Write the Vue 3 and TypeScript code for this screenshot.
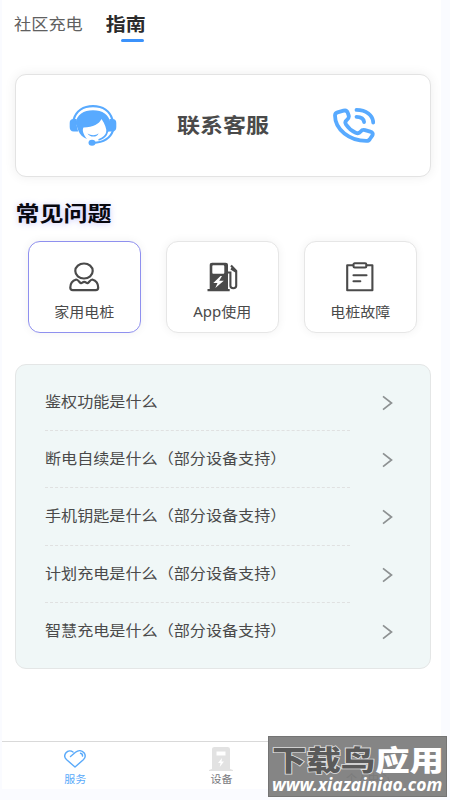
<script setup lang="ts">
import { ref } from 'vue'

interface Topic {
  label: string
  icon: 'user' | 'pump' | 'clipboard'
}

const topics: Topic[] = [
  { label: '家用电桩', icon: 'user' },
  { label: 'App使用', icon: 'pump' },
  { label: '电桩故障', icon: 'clipboard' },
]

const activeTopic = ref(0)

const questions: string[] = [
  '鉴权功能是什么',
  '断电自续是什么（部分设备支持）',
  '手机钥匙是什么（部分设备支持）',
  '计划充电是什么（部分设备支持）',
  '智慧充电是什么（部分设备支持）',
]
</script>

<template>
  <div class="page">
    <main class="screen">
      <nav class="tabs">
        <span class="tab squash">社区充电</span>
        <div class="tab-active">
          <span class="tab-name squash">指南</span>
          <i class="underline"></i>
        </div>
      </nav>

      <section class="contact">
        <svg class="agent" viewBox="0 0 48 41" fill="none">
          <path d="M4.500 15C7 6 14.500 1.200 24 1.200S41 6 43.500 15" stroke="#58aaff" stroke-width="2.300" />
          <path d="M7.500 14H4.500C2 14 .7 15.500 .7 18v4c0 2.800 1.300 4.500 4 4.500h4.500L7.500 20Z" fill="#58aaff" />
          <path d="M40.500 14h3c2.500 0 3.800 1.500 3.800 4v4c0 2.800-1.300 4.500-4 4.500h-4L40.500 20Z" fill="#58aaff" />
          <path d="M6.500 18C8 9.500 14.500 5.300 24 5.300S40 9.500 41.500 18v7.500L37.500 27.500c0-4.500-1.700-8.500-5-13.500-2.500 5-8 8.200-18 8.500-1.500 2.500-.5 6.500 3.500 11.500-4.500-1.500-7-4.500-8.500-8Z" fill="#58aaff" />
          <path d="M18.500 28.500c4 2.300 8 2.300 11-.3-.7 4.500-9 4.500-11 .3Z" fill="#58aaff" />
          <path d="M44 25.500C41.500 33 34 37.400 24 38" stroke="#58aaff" stroke-width="2.200" />
          <path d="M38.500 26C37.500 30.500 34.500 33.500 29.500 35" stroke="#58aaff" stroke-width="1.700" />
          <ellipse cx="23" cy="37.700" rx="3.500" ry="3" fill="#58aaff" />
        </svg>
        <h2 class="contact-title squash">联系客服</h2>
        <svg class="phone" viewBox="0 0 42 35" fill="none" stroke="#58aaff" stroke-width="3.800" stroke-linecap="round" stroke-linejoin="round">
          <path d="M4.500 4.400 10.500 2.700c2-.6 3.500 0 4.200 2L15.700 7.500c.6 2-.2 3-1.700 4.200-2 1.500-2.200 2.800-1 4.700 2.500 3.800 5.700 6.500 9.700 8.300 2 .9 3.600.6 4.900-1.100 1.300-1.700 2.400-2.100 4.400-1.500l5.200 1.500c2.600.8 3.200 2.200 1.900 4.300L36.900 31c-.7 1.300-1.800 1.900-3.400 1.900C16.500 33 2 21.500 2 7.500 2 5.700 2.800 4.900 4.500 4.400Z" />
          <path d="M23.500 1.900C33 2 40 7.200 40.200 14.500" />
          <path d="M23.500 8.800c4.500 0 7.200 1.900 7.600 5.200" />
        </svg>
      </section>

      <h1 class="heading"><span class="squash">常见问题</span></h1>

      <section class="topics">
        <button
          v-for="(topic, i) in topics"
          :key="topic.label"
          class="topic"
          :class="{ selected: i === activeTopic }"
          @click="activeTopic = i"
        >
          <svg v-if="topic.icon === 'user'" class="topic-icon" viewBox="0 0 32 30" fill="none" stroke="#4a4a4a" stroke-width="2.200" stroke-linejoin="round">
            <ellipse cx="16" cy="9" rx="8.700" ry="7.500" />
            <path d="M2.300 25.500C2.300 21.500 4.500 18.700 8.300 17.500c1.200 0 2.200 1.300 3.200 2.500 1 1.300 1.800 1.500 2.800.7 1.300-1 2.600-1 3.900 0 1 .8 1.800.6 2.800-.7 1-1.200 2-2.500 3.200-2.500 3.800 1.200 6 4 6 8 0 1.800-.8 2.700-2.500 2.700H4.800c-1.700 0-2.500-.9-2.500-2.700Z" />
          </svg>
          <svg v-else-if="topic.icon === 'pump'" class="topic-icon" viewBox="0 0 32 30" fill="none">
            <path fill-rule="evenodd" d="M3.700 27V3.200C3.700 1.500 4.500.8 6.200.8h13.300c1.700 0 2.500.7 2.500 2.400V27h1.700v2.200H1.500V27ZM7.500 3.300c-.8 0-1.200.4-1.200 1.200v6c0 .9.400 1.300 1.200 1.300h9.500c.9 0 1.300-.4 1.300-1.300v-6c0-.8-.4-1.200-1.300-1.200ZM14.500 14 7.300 21h4.200l-2.200 5 8.500-7.200h-4.600L16 14Z" fill="#4a4a4a" />
            <path d="M22 10.500h2.400v13.300c0 3.200 5.800 3.200 5.800 0V9L25 3.500M25 6.500l4.800 3" stroke="#4a4a4a" stroke-width="2.100" />
          </svg>
          <svg v-else class="topic-icon" viewBox="0 0 32 30" fill="none" stroke="#4a4a4a" stroke-width="2.100" stroke-linejoin="round">
            <path d="M9.500 3.300H3.200v24.900h25.200V3.300H22" />
            <rect x="9.500" y="1.300" width="12.800" height="4.200" rx="1.200" />
            <path d="M9.500 13.200h13M9.500 19.200h6.800" stroke-linecap="round" />
          </svg>
          <span class="topic-label squash">{{ topic.label }}</span>
        </button>
      </section>

      <ul class="faq">
        <li v-for="q in questions" :key="q" class="row">
          <span class="question"><span class="question-text">{{ q }}</span></span>
          <svg class="chevron" viewBox="0 0 11 16" fill="none" stroke="#8d9192" stroke-width="1.700">
            <path d="M1 1.300 9.500 8 1 14.700" />
          </svg>
        </li>
      </ul>

      <footer class="bar">
        <div class="bar-item current">
          <svg class="heart" viewBox="0 0 22 18" fill="none" stroke="#5aaafa" stroke-width="1.400" stroke-linecap="round" stroke-linejoin="round">
            <path d="M6.500 6.500 11.500 2.300C14.500-.2 18 .5 20 2.800c2 2.600 1.300 5-.7 7L11 17 2.700 9.800C.5 7.800.2 5 2 2.800 4 .5 7 .5 9 2" />
            <path d="M16.500 3.300c1.500.3 2.200 1.300 2 2.800" />
          </svg>
          <span class="bar-label squash">服务</span>
        </div>
        <div class="bar-item">
          <svg class="charger" viewBox="0 0 24 24">
            <path fill-rule="evenodd" d="M3 22V2.500C3 .8 4 0 5.500 0h13C20.200 0 21 .8 21 2.500V22l3 1v1H0v-1ZM7.500 4.500v4h9v-4ZM13 11l-4 5h2.500l-.8 4 4.300-5.500h-2.500Z" fill="#e2e2e2" />
          </svg>
          <span class="bar-label squash">设备</span>
        </div>
        <div class="bar-item"></div>
      </footer>
    </main>

    <aside class="watermark">
      <span class="hidden-tab">个人中心</span>
      <div class="brand"><span class="brand-dark">下载鸟</span><span class="brand-light">应用</span></div>
      <div class="site">www.xiazainiao.com</div>
    </aside>
  </div>
</template>

<style>
body {
  background: #fafbff;
}
</style>

<style scoped>
.page {
  position: relative;
  box-sizing: border-box;
  width: 450px;
  height: 800px;
  padding: 0 9px 11px 2px;
  overflow: hidden;
  background: #fafbff;
  font-family: 'Noto Sans', 'Noto Sans CJK SC', sans-serif;
  color: #4a4a4a;
}

.screen {
  display: flex;
  flex-direction: column;
  box-sizing: border-box;
  height: 789px;
  background: #fff;
}

/* Type is slightly wider than tall throughout */
.squash {
  display: inline-block;
  white-space: nowrap;
  transform: scaleY(0.9);
}

.tabs {
  display: flex;
  gap: 23px;
  height: 74px;
  padding-left: 12px;
}

.tab {
  height: 49px;
  font-size: 17.200px;
  line-height: 49px;
  color: #606060;
}

.tab-active {
  display: flex;
  flex-direction: column;
  align-items: flex-end;
  width: 40px;
}

.tab-name {
  height: 39px;
  font-size: 20px;
  font-weight: 700;
  line-height: 49px;
  color: #2b2b2b;
}

.underline {
  width: 23px;
  height: 3px;
  margin-right: 2px;
  border-radius: 2px;
  background: #3b92fb;
}

.contact {
  display: grid;
  grid-template-columns: 161px 92px 1fr;
  align-items: center;
  box-sizing: border-box;
  width: 416px;
  height: 103px;
  margin-left: 13px;
  border: 1px solid #e3e3e3;
  border-radius: 11px;
  background: #fff;
  box-shadow: 0 0 12px rgba(0, 0, 0, 0.07);
}

.agent {
  width: 48px;
  height: 41px;
  margin-left: 53px;
}

.contact-title {
  margin: 0 0 2px;
  font-size: 23px;
  font-weight: 700;
  line-height: 30px;
}

.phone {
  width: 42px;
  height: 35px;
  margin-left: 64px;
}

.heading {
  height: 64px;
  margin: 0;
  padding-left: 13.500px;
  font-size: 24px;
  font-weight: 700;
  line-height: 71px;
  color: #08080f;
}

.heading .squash {
  text-shadow: 0 1px 7px rgba(115, 115, 245, 0.4);
  transform: scaleY(0.87);
}

.topics {
  display: flex;
  gap: 24.500px;
  padding-left: 25.500px;
}

.topic {
  display: flex;
  flex-direction: column;
  align-items: center;
  box-sizing: border-box;
  width: 113.500px;
  height: 92px;
  padding: 20px 0 0;
  border: 1px solid #e6e6e6;
  border-radius: 12px;
  background: #fff;
  box-shadow: 0 0 10px rgba(0, 0, 0, 0.06);
  font-family: inherit;
  color: #4a4a4a;
}

.topic.selected {
  border-color: #8f90ef;
}

.topic-icon {
  width: 32px;
  height: 30px;
}

.topic-label {
  margin-top: 9px;
  font-size: 15px;
  line-height: 22px;
}

.faq {
  display: flex;
  flex-direction: column;
  box-sizing: border-box;
  width: 416px;
  height: 305px;
  margin: 31px 0 0 13px;
  padding: 9px 37px 8px 29px;
  border: 1px solid #e4e6e6;
  border-radius: 11px;
  background: #f0f7f7;
  list-style: none;
}

.row {
  display: flex;
  justify-content: space-between;
  height: 57.200px;
}

.question {
  box-sizing: border-box;
  width: 305px;
  border-bottom: 1px dashed #e0e1e1;
  line-height: 54px;
  white-space: nowrap;
}

.row:last-child .question {
  border-bottom: 0;
}

.question-text {
  display: inline-block;
  font-size: 16.100px;
  transform: scaleY(0.92);
}

.chevron {
  width: 11px;
  height: 16px;
  margin-top: 21px;
}

.bar {
  display: flex;
  box-sizing: border-box;
  height: 48px;
  margin-top: auto;
  border-top: 1px solid #d9d9d9;
}

.bar-item {
  display: flex;
  flex: 1;
  flex-direction: column;
  align-items: center;
  color: #77777c;
}

.current {
  color: #5aaafa;
}

.heart {
  width: 22px;
  height: 18px;
  margin: 8px 0 2px;
}

.charger {
  width: 24px;
  height: 24px;
  margin: 5px 0 0;
}

.bar-label {
  font-size: 11px;
  line-height: 17px;
}

.charger + .bar-label {
  margin-top: -1px;
}

/* Site stamp laid over the tab bar */
.watermark {
  position: absolute;
  top: 736px;
  left: 268px;
  box-sizing: border-box;
  width: 179px;
  height: 61px;
  padding: 4px 0 0 3px;
  border: 1px solid #747474;
  background: #858585;
  white-space: nowrap;
}

/* Tab label showing faintly through the stamp */
.hidden-tab {
  position: absolute;
  top: 34px;
  left: 77px;
  font-size: 11px;
  line-height: 16px;
  color: #7b7b7b;
}

.brand {
  position: relative;
  width: 172px;
  height: 38px;
  font-size: 34.400px;
  font-weight: 900;
  line-height: 38px;
  transform: scaleY(0.82);
}

.brand-dark {
  color: #5a5a5a;
  -webkit-text-stroke: 2px #dedede;
  paint-order: stroke fill;
}

.brand-light {
  color: #fff;
}

.site {
  position: relative;
  width: 170px;
  margin-top: -5px;
  font-family: 'Noto Sans', sans-serif;
  font-size: 17.500px;
  font-style: italic;
  font-weight: 700;
  line-height: 20px;
  color: #fff;
}
</style>
